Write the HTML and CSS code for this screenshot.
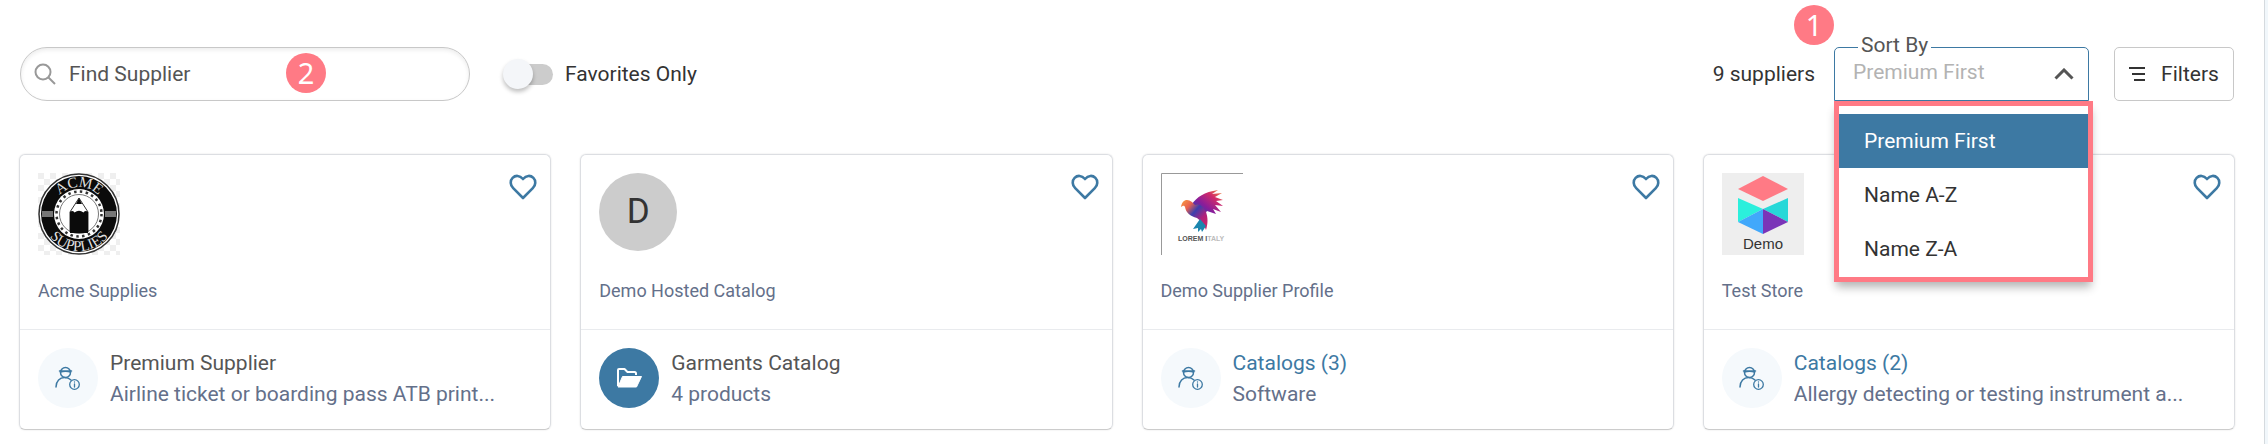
FILE: index.html
```
<!DOCTYPE html>
<html lang="en">
<head>
  <meta charset="UTF-8" />
  <meta name="viewport" content="width=device-width, initial-scale=1.0" />
  <title>Suppliers</title>
  <link rel="stylesheet" href="styles.css">
</head>
<body>
  <!-- shared icons -->
  <svg class="sprite" aria-hidden="true">
    <symbol id="heart" viewBox="0 0 28 26">
      <path d="M14 24 L4.200 14.200 C1 11 1 6.500 3.600 3.900 C6.400 1.100 10.600 1.100 14 5 C17.400 1.100 21.600 1.100 24.400 3.900 C27 6.500 27 11 23.800 14.200 Z" fill="none" stroke="#3d79a3" stroke-width="2.600" stroke-linejoin="round" />
    </symbol>
    <symbol id="worker" viewBox="0 0 26 24">
      <g fill="none" stroke="#3d79a3" stroke-width="1.500" stroke-linecap="round">
        <circle cx="10.500" cy="6.500" r="5" />
        <path d="M4.500 5 H16.500 M5.500 6.200 C8 4.800 13 4.800 15.500 6.200" />
        <path d="M1 21 C1 15 5 11.500 9.500 11.500 C12.500 11.500 14.500 12.500 16 14" />
        <circle cx="19.500" cy="18.500" r="4.800" stroke-width="1.300" />
        <path d="M19.500 18 V21 M19.500 15.800 V16" stroke-width="1.300" />
      </g>
    </symbol>
  </svg>

  <main class="page">
    <div class="toolbar">
      <div class="search">
        <svg class="search-icon" viewBox="0 0 22 22"><circle cx="9" cy="9" r="7.500" /><path d="M14.500 14.500 L21 21" /></svg>
        <input type="text" id="search" placeholder="Find Supplier" aria-label="Find Supplier" />
        <span class="badge badge-search">2</span>
      </div>

      <label class="favorites">
        <input type="checkbox" class="switch" />
        Favorites Only
      </label>

      <span class="count">9 suppliers</span>

      <div class="sort">
        <span class="badge badge-sort">1</span>
        <label for="sortBy">Sort By</label>
        <select id="sortBy">
          <option>Premium First</option>
          <option>Name A-Z</option>
          <option>Name Z-A</option>
        </select>
        <svg class="chevron" viewBox="0 0 20 12"><path d="M1.500 10.500 L10 2 L18.500 10.500" /></svg>
        <div class="menu">
          <button type="button" class="selected">Premium First</button>
          <button type="button">Name A-Z</button>
          <button type="button">Name Z-A</button>
        </div>
      </div>

      <button type="button" class="filters">
        <svg class="filters-icon" viewBox="0 0 16 16"><path d="M0 2 H16 M3 8 H16 M5 14 H16" /></svg>
        Filters
      </button>
    </div>

    <div class="cards">
      <article class="card">
        <div class="card-top">
          <div class="card-head">
            <svg class="logo" viewBox="0 0 82 82">
              <defs>
                <pattern id="checker" width="12" height="12" patternUnits="userSpaceOnUse">
                  <rect width="12" height="12" fill="#fff" /><rect width="6" height="6" fill="#efefef" /><rect x="6" y="6" width="6" height="6" fill="#efefef" />
                </pattern>
                <path id="arcTop" d="M14 41 A27 27 0 0 1 68 41" />
                <path id="arcBottom" d="M4 41 A37 37 0 0 0 78 41" />
              </defs>
              <rect width="82" height="82" fill="url(#checker)" />
              <circle cx="41" cy="41" r="40" fill="#fff" stroke="#333" stroke-width="1.500" />
              <circle cx="41" cy="41" r="38" fill="#0b0b0b" />
              <circle cx="41" cy="41" r="25" fill="#fff" />
              <circle cx="41" cy="41" r="22.500" fill="none" stroke="#333" stroke-width="2.500" stroke-dasharray="2.500 3.400" />
              <circle cx="41" cy="41" r="19.500" fill="#fff" stroke="#777" stroke-width="1" />
              <path d="M32 59 V39 L41 25 L50 39 V59 Z" fill="#fff" stroke="#333" stroke-width="1" />
              <path d="M41 25 L44 31 H38 Z M32 60 V39 Q34.500 37 36.500 39.500 Q41 36 45.500 39.500 Q47.500 37 50 39 V60 Z" fill="#0b0b0b" />
              <rect x="4" y="38" width="11" height="6" fill="#777" />
              <rect x="67" y="38" width="11" height="6" fill="#777" />
              <text class="acme"><textPath href="#arcTop" startOffset="50%">ACME</textPath></text>
              <text class="acme"><textPath href="#arcBottom" startOffset="50%">SUPPLIES</textPath></text>
            </svg>
            <button type="button" class="fav" aria-label="Add to favorites"><svg><use href="#heart" /></svg></button>
          </div>
          <h2>Acme Supplies</h2>
        </div>
        <div class="card-bottom">
          <span class="circle"><svg><use href="#worker" /></svg></span>
          <div class="info">
            <p class="info-title">Premium Supplier</p>
            <p class="info-text">Airline ticket or boarding pass ATB print...</p>
          </div>
        </div>
      </article>

      <article class="card">
        <div class="card-top">
          <div class="card-head">
            <span class="avatar">D</span>
            <button type="button" class="fav" aria-label="Add to favorites"><svg><use href="#heart" /></svg></button>
          </div>
          <h2>Demo Hosted Catalog</h2>
        </div>
        <div class="card-bottom">
          <span class="circle circle-dark">
            <svg viewBox="0 0 26 24"><path d="M2 20 V4 Q2 3 3 3 H8.500 L11.500 6 H18.500 Q20 6 20 7.500 V9" fill="none" stroke="#fff" stroke-width="2" stroke-linejoin="round" /><path d="M6.500 10.500 H25.500 L20.500 21 H2 Z" fill="#fff" stroke="#fff" stroke-linejoin="round" /></svg>
          </span>
          <div class="info">
            <p class="info-title">Garments Catalog</p>
            <p class="info-text">4 products</p>
          </div>
        </div>
      </article>

      <article class="card">
        <div class="card-top">
          <div class="card-head">
            <svg class="logo" viewBox="0 0 82 82">
              <defs>
                <linearGradient id="wing" x1="0" y1="1" x2="1" y2="0">
                  <stop offset="0.100" stop-color="#2746b0" /><stop offset="0.400" stop-color="#8a1d9a" /><stop offset="0.700" stop-color="#d02a6a" /><stop offset="1" stop-color="#f79a3c" />
                </linearGradient>
                <linearGradient id="body" x1="0" y1="0" x2="1" y2="1">
                  <stop offset="0" stop-color="#f9a03f" /><stop offset="0.250" stop-color="#e8604f" /><stop offset="0.450" stop-color="#3b3fae" /><stop offset="0.700" stop-color="#b0207c" /><stop offset="1" stop-color="#d8265f" />
                </linearGradient>
              </defs>
              <path d="M0.500 82 V0.500 H82" fill="none" stroke="#999" />
              <path d="M31 31 C36 24 43 19 57 17 L51 21 L61 20 L54 24 L62 27 L55 28 L62 33 L54 32 L60 39 L52 36 L55 41 L46 38 L43 42 Z" fill="url(#wing)" />
              <path d="M20 34 C21 27 26 25 31 29 L34 32 C38 30 42 33 45 39 C47 45 47 50 45 57 C43 51 40 48 36 45 C29 43 25 40 24 34 C23 32 22 33 20 34 Z" fill="url(#body)" />
              <path d="M39 46 L45 53 L41 59 L40 56 L37 59 L37 55 L32 56 Z" fill="#1b86ae" />
              <text x="17" y="68" class="lorem">LOREM I<tspan fill="#bbb">TALY</tspan></text>
            </svg>
            <button type="button" class="fav" aria-label="Add to favorites"><svg><use href="#heart" /></svg></button>
          </div>
          <h2>Demo Supplier Profile</h2>
        </div>
        <div class="card-bottom">
          <span class="circle"><svg><use href="#worker" /></svg></span>
          <div class="info">
            <a href="#" class="info-title">Catalogs (3)</a>
            <p class="info-text">Software</p>
          </div>
        </div>
      </article>

      <article class="card">
        <div class="card-top">
          <div class="card-head">
            <svg class="logo" viewBox="0 0 82 82">
              <rect width="82" height="82" fill="#eee" />
              <path d="M41 3 L66 16 L41 28 L16 16 Z" fill="#ff7a85" />
              <path d="M16 25 L41 36 L16 49 Z" fill="#2befdc" />
              <path d="M66 25 L41 36 L66 49 Z" fill="#27d8d8" />
              <path d="M41 36 L16 49 L41 61 Z" fill="#41a8fb" />
              <path d="M41 36 L66 49 L41 61 Z" fill="#7a35b8" />
              <text x="41" y="76" class="demo">Demo</text>
            </svg>
            <button type="button" class="fav" aria-label="Add to favorites"><svg><use href="#heart" /></svg></button>
          </div>
          <h2>Test Store</h2>
        </div>
        <div class="card-bottom">
          <span class="circle"><svg><use href="#worker" /></svg></span>
          <div class="info">
            <a href="#" class="info-title">Catalogs (2)</a>
            <p class="info-text">Allergy detecting or testing instrument a...</p>
          </div>
        </div>
      </article>
    </div>
  </main>
</body>
</html>
```
FILE: styles.css
```
* {
  box-sizing: border-box;
}
body {
  margin: 0;
  padding-right: 3px;
  background: #f1f7fb;
  color: #333;
  font-family: Roboto, sans-serif;
  font-size: 21px;
  line-height: 30px;
}
button, input, select {
  font: inherit;
  color: inherit;
}
h2, p {
  margin: 0;
}
.sprite {
  display: none;
}
.page {
  min-height: 100vh;
  padding: 47px 29px 14px 19px;
  background: #fff;
  border-right: 1px solid #d5dade;
}

/* toolbar */
.toolbar {
  display: flex;
  align-items: center;
  height: 54px;
  margin-bottom: 53px;
  padding: 0 1px;
}
.search {
  position: relative;
  width: 450px;
  height: 54px;
}
.search input {
  width: 100%;
  height: 100%;
  padding: 0 20px 0 48px;
  border: 1px solid #c8c8c8;
  border-radius: 27px;
  background: #fff;
  box-shadow: inset 0 2px 4px rgba(0, 0, 0, 0.08);
}
.search input::placeholder {
  color: #555;
  opacity: 1;
}
.search-icon {
  position: absolute;
  top: 16px;
  left: 14px;
  width: 22px;
  height: 22px;
  fill: none;
  stroke: #999;
  stroke-width: 2;
}
.badge {
  position: absolute;
  width: 40px;
  height: 40px;
  border-radius: 50%;
  background: #ff7a85;
  color: #fff;
  font-family: "Noto Sans", sans-serif;
  font-size: 29px;
  line-height: 40px;
  text-align: center;
}
.badge-search {
  top: 6px;
  left: 266px;
}
.badge-sort {
  top: -42px;
  left: -40px;
}
.favorites {
  display: flex;
  align-items: center;
  gap: 12px;
  margin-left: 33px;
}
.switch {
  appearance: none;
  display: flex;
  align-items: center;
  width: 46px;
  height: 21px;
  margin: 0 0 0 4px;
  border-radius: 11px;
  background: #ccc;
}
.switch::before {
  content: "";
  width: 30px;
  height: 30px;
  margin-left: -4px;
  flex-shrink: 0;
  border-radius: 50%;
  background: #f4f6f9;
  box-shadow: 0 3px 4px rgba(0, 0, 0, 0.25);
}
.count {
  margin-left: auto;
  margin-right: 19px;
}
.sort {
  position: relative;
  width: 255px;
  height: 54px;
  margin-right: 25px;
}
.sort label {
  position: absolute;
  top: -17px;
  left: 24px;
  padding: 0 3px;
  background: #fff;
  color: #555;
}
.sort select {
  appearance: none;
  width: 100%;
  height: 100%;
  padding: 0 18px 4px;
  border: 1px solid #3d79a3;
  border-radius: 5px 5px 0 0;
  background: #fff;
  color: #b3b3b3;
}
.chevron {
  position: absolute;
  top: 21px;
  right: 15px;
  width: 20px;
  height: 12px;
  fill: none;
  stroke: #555;
  stroke-width: 3;
}
.menu {
  position: absolute;
  top: 54px;
  left: 0;
  z-index: 1;
  display: flex;
  flex-direction: column;
  width: 259px;
  padding: 8px 0 1px;
  border: 5px solid #ff7a85;
  background: #fff;
  box-shadow: 0 7px 9px -2px rgba(0, 0, 0, 0.3);
}
.menu button {
  height: 54px;
  padding: 0 25px;
  border: none;
  background: #fff;
  text-align: left;
}
.menu .selected {
  background: #3d79a3;
  color: #fff;
}
.filters {
  display: flex;
  align-items: center;
  justify-content: center;
  gap: 16px;
  width: 120px;
  height: 54px;
  padding: 0;
  border: 1px solid #c8c8c8;
  border-radius: 5px;
  background: #fff;
}
.filters-icon {
  width: 16px;
  height: 16px;
  fill: none;
  stroke: #333;
  stroke-width: 2;
}

/* cards */
.cards {
  display: grid;
  grid-template-columns: repeat(4, 1fr);
  gap: 29px;
}
.card {
  min-width: 0;
  border: 1px solid #dcdee2;
  border-bottom-color: #ccc;
  border-radius: 6px;
  box-shadow: 0 0 2px rgba(0, 0, 0, 0.12);
}
.card-top {
  height: 175px;
  padding: 18px 13px 0 18px;
  border-bottom: 1px solid #e9ebee;
}
.card-head {
  display: flex;
  align-items: flex-start;
  justify-content: space-between;
  height: 103px;
}
.card h2 {
  color: #64708a;
  font-size: 18px;
  font-weight: 400;
  line-height: 30px;
}
.logo {
  width: 82px;
  height: 82px;
  overflow: visible;
}
.acme {
  fill: #ddd;
  font-family: "Liberation Serif", serif;
  font-size: 15px;
  text-anchor: middle;
}
.lorem {
  fill: #555;
  font-family: "Liberation Sans", sans-serif;
  font-size: 7px;
  font-weight: 700;
}
.demo {
  fill: #333;
  font-family: "Liberation Sans", sans-serif;
  font-size: 15px;
  text-anchor: middle;
}
.avatar {
  width: 78px;
  height: 78px;
  border-radius: 50%;
  background: #ccc;
  font-size: 35px;
  line-height: 78px;
  text-align: center;
}
.fav {
  padding: 1px 0 0;
  border: none;
  background: none;
}
.fav svg {
  display: block;
  width: 28px;
  height: 26px;
}
.card-bottom {
  display: flex;
  gap: 12px;
  padding: 18px 18px 19px;
}
.circle {
  display: flex;
  align-items: center;
  justify-content: center;
  flex-shrink: 0;
  width: 60px;
  height: 60px;
  border-radius: 50%;
  background: #f5f9fc;
}
.circle svg {
  width: 26px;
  height: 24px;
}
.circle-dark {
  background: #3d79a3;
}
.info {
  min-width: 0;
}
.info-title {
  display: block;
  color: #555;
  text-decoration: none;
}
a.info-title {
  color: #3d79a3;
}
.info-text {
  overflow: hidden;
  color: #64708a;
  line-height: 32px;
  text-overflow: ellipsis;
  white-space: nowrap;
}
```
